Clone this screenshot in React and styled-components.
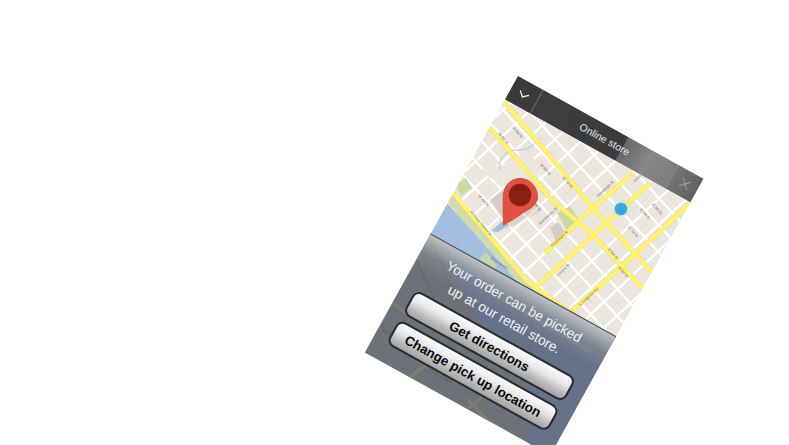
import React from "react";
import styled, { createGlobalStyle } from "styled-components";

const ANGLE = 29;

const GlobalStyle = createGlobalStyle`
    html, body {
        margin: 0;
        background: #fff;
        font-family: "Liberation Sans", Arial, sans-serif;
    }
`;

const Stage = styled.div`
    box-sizing: border-box;
    width: 789px;
    height: 445px;
    padding: 76px 0 0 518px;
    overflow: hidden;
    background: #fff;
`;

const Phone = styled.div`
    width: 212px;
    height: 316px;
    display: flex;
    flex-direction: column;
    transform-origin: 0 0;
    transform: rotate(${ANGLE}deg);
`;

const Header = styled.header`
    height: 27px;
    flex: none;
    display: flex;
`;

const HeaderButton = styled.div`
    width: ${(p) => p.$width}px;
    flex: none;
    display: flex;
    align-items: center;
    justify-content: center;
    box-sizing: border-box;
    background: ${(p) => p.$bg};
    ${(p) => p.$side}: 1px solid rgba(150, 150, 150, 0.35);
`;

const Title = styled.div`
    flex: 1;
    display: flex;
    align-items: center;
    justify-content: center;
    color: #e8e8e8;
    font-size: 10.3px;
    background: linear-gradient(to right, #3c3d3f 0, #3a3b3d 97px, #666768 97px, #868787 125px, #7c7d7d 155px);
`;

const MapFrame = styled.div`
    height: 153px;
    flex: none;
    background: #ebe7de;
    overflow: hidden;
`;

const Drawing = styled.svg`
    display: block;
`;

const Sheet = styled.section`
    position: relative;
    flex: 1;
    display: flex;
    flex-direction: column;
    align-items: center;
    box-sizing: border-box;
    padding: 9px 14px 0;
    overflow: hidden;
    background: #6e7278;
    border-top: 1px solid #4b4d50;
`;

const SheetMap = styled.svg`
    position: absolute;
    top: 0;
    left: 0;
`;

const SheetFade = styled.div`
    position: absolute;
    top: 0;
    left: 0;
    right: 0;
    height: 38px;
    background: linear-gradient(to bottom, rgba(205, 207, 205, 0.85), rgba(150, 155, 160, 0.4) 50%, rgba(110, 116, 126, 0));
`;

const Message = styled.p`
    position: relative;
    margin: 0 0 7px;
    width: 100%;
    text-align: center;
    white-space: nowrap;
    color: #f2f3f4;
    font-size: 13.8px;
    line-height: 19.5px;
`;

const Actions = styled.div`
    position: relative;
    width: 100%;
    display: flex;
    flex-direction: column;
    gap: 6px;
`;

const ActionButton = styled.button`
    height: 28px;
    padding: 0;
    box-sizing: border-box;
    border: 2px solid #2c2d2f;
    border-radius: 8px;
    background: linear-gradient(to bottom, #fbfbfb 0, #e6e6e6 40%, #b9b9b9 75%, #a4a4a4 100%);
    color: #0a0a0a;
    font-family: inherit;
    font-size: 13.3px;
    font-weight: 700;
    white-space: nowrap;
`;

// map is traced in page coordinates, this group takes it back into the panel
const toPanel = (top) =>
    `translate(0 ${-top}) rotate(${-ANGLE}) translate(-518 -76)`;

const R = [0.676, 0.737];
const C = [0.731, -0.682];

const line = (x, y, d, key) => (
    <line
        key={key}
        x1={x - d[0] * 400}
        y1={y - d[1] * 400}
        x2={x + d[0] * 400}
        y2={y + d[1] * 400}
    />
);

const whiteLong = Array.from({ length: 13 }, (_, i) => i - 6);
const whiteCross = Array.from({ length: 15 }, (_, i) => i - 7);

const yellow = [
    "M505,103 L593,208 L652,272 L680,302",
    "M490,128 L552,200 L593,235 L643,289",
    "M545,253 L593,208 L633,173",
    "M535,288 L593,235 L650,183",
    "M573,310 L643,247 L690,203",
    "M453,193 L527,281 L560,305 L620,345",
];

const labels = [
    ["W 5th St", 512, 128, 48],
    ["W 6th St", 498, 134, 48],
    ["W 3rd St", 478, 196, 48],
    ["San Antonio St", 540, 225, -43],
    ["Guadalupe St", 552, 247, -43],
    ["Guadalupe St", 598, 197, -43],
    ["Lavaca St", 558, 276, -43],
    ["N Congress Ave", 580, 306, -43],
    ["W Cesar Chavez St", 470, 212, 50],
    ["W 8th St", 540, 165, 48],
    ["W 7th St", 562, 178, 48],
    ["E 6th St", 608, 250, 48],
    ["E 5th St", 618, 268, 48],
    ["E 8th St", 640, 210, 48],
    ["E 7th St", 628, 228, 48],
    ["Colorado St", 635, 182, -43],
    ["Shoal Beach", 490, 258, 35],
    ["W 2nd St", 530, 200, 48],
    ["E 9th St", 652, 205, 48],
];

const CityMap = () => (
    <Drawing width="212" height="153" viewBox="0 0 212 153">
        <g transform={toPanel(27)}>
            <g stroke="#e2ddd2" strokeWidth="0.5" fill="none">
                {whiteLong.map((k) =>
                    line(599.8 + k * 13.6, 201.8 - k * 12.4, R, `ra${k}`)
                )}
                {whiteCross.map((k) =>
                    line(599.5 + k * 13, 215 + k * 13.9, C, `ca${k}`)
                )}
            </g>
            <g stroke="#fff" strokeWidth="2.2" fill="none">
                {whiteLong.map((k) =>
                    line(593 + k * 13.6, 208 - k * 12.4, R, `r${k}`)
                )}
                {whiteCross.map((k) =>
                    line(593 + k * 13, 208 + k * 13.9, C, `c${k}`)
                )}
            </g>
            <polygon points="490,200 503,190 520,212 505,222" fill="#d3cfc7" />
            <polygon points="550,227 558,222 566,233 556,241" fill="#d3cfc7" />
            <polygon points="505,165 525,150 535,160 540,185 500,185 480,170" fill="#ebe7de" />
            <path d="M500,170 C498,158 505,150 520,150 C528,150 532,146 540,138" fill="none" stroke="#a8c2e2" strokeWidth="1" />
            <polygon points="557,213 570,206 581,222 567,231" fill="#c9dba5" />
            <polygon points="455,185 466,178 472,188 461,196" fill="#c9dba5" />
            <polygon points="446,199 452,192 535,290 522,300" fill="#cfdcae" />
            <polygon points="447,203 523,288 500,320 410,250" fill="#a3bfdf" />
            <polygon points="480,258 486,252 497,266 493,272" fill="#c4d6a4" />
            <path d="M491,231 L504,220 L509,225 L498,232 Z" fill="#a3bfdf" />
            <g fill="none" strokeLinecap="butt">
                {yellow.map((d) => (
                    <path key={`o${d}`} d={d} stroke="#efdc66" strokeWidth="4.6" />
                ))}
                {yellow.map((d) => (
                    <path key={d} d={d} stroke="#fff270" strokeWidth="3.8" />
                ))}
            </g>
            <g fontSize="3.6" fill="#6a675f" fontFamily="'Liberation Sans', sans-serif">
                {labels.map(([text, x, y, a]) => (
                    <text key={text + x} transform={`translate(${x} ${y}) rotate(${a})`}>
                        {text}
                    </text>
                ))}
            </g>
            <circle cx="621" cy="209" r="8" fill="#bfe0ee" opacity="0.6" />
            <circle cx="621" cy="209" r="6.2" fill="#38a8dd" />
            <path d="M503,226 L538,208 L520,178 Z" fill="#8a8780" opacity="0.2" transform="translate(3 3)" />
            <path
                d="M503,226 C503,214 502,203 503,193 C505,183 513,177 522,178 C532,179 539,189 538,199 C536,205 531,209 525,212 C518,217 510,222 503,226 Z"
                fill="#e0523f"
            />
            <circle cx="520" cy="195" r="11.3" fill="#8b1d15" />
        </g>
    </Drawing>
);

const FadedMap = () => (
    <SheetMap width="212" height="136" viewBox="0 0 212 136">
        <g transform={toPanel(180)}>
            <polygon points="436,236 472,308 528,382 528,460 640,460 640,300 560,300" fill="#66728a" />
            <path d="M430,236 L458,300 M412,250 L450,330" stroke="#5d6268" strokeWidth="1" fill="none" />
            <g stroke="#7a7f70" fill="none" strokeWidth="3.5">
                <path d="M393,302 L413,317" />
                <path d="M408,378 L435,358" />
                <path d="M468,408 L490,390" />
                <path d="M468,398 L490,422" />
                <path d="M470,340 L500,366" />
            </g>
            <path d="M500,296 L590,350" stroke="#747c86" strokeWidth="5" fill="none" />
            <g fontSize="3.6" fill="#545960" fontFamily="'Liberation Sans', sans-serif">
                <text transform="translate(383 330) rotate(30)">Auditorium Shores</text>
                <text transform="translate(432 372) rotate(30)">Palmer Center</text>
            </g>
        </g>
    </SheetMap>
);

const App = () => (
    <>
        <GlobalStyle />
        <Stage>
            <Phone>
                <Header>
                    <HeaderButton $width={29} $side="border-right" $bg="#3a3b3d">
                        <Drawing width="12" height="8" viewBox="0 0 12 8">
                            <path d="M1 1.5 L6 6.2 L11 1.5" fill="none" stroke="#f2f2f2" strokeWidth="1.3" />
                        </Drawing>
                    </HeaderButton>
                    <Title>Online store</Title>
                    <HeaderButton $width={28} $side="border-left" $bg="linear-gradient(to right, #737474, #606162)">
                        <Drawing width="11" height="11" viewBox="0 0 11 11">
                            <path d="M1 1 L10 10 M10 1 L1 10" fill="none" stroke="#a6a7a7" strokeWidth="0.9" />
                        </Drawing>
                    </HeaderButton>
                </Header>
                <MapFrame>
                    <CityMap />
                </MapFrame>
                <Sheet>
                    <FadedMap />
                    <SheetFade />
                    <Message>
                        Your order can be picked
                        <br />
                        up at our retail store.
                    </Message>
                    <Actions>
                        <ActionButton>Get directions</ActionButton>
                        <ActionButton>Change pick up location</ActionButton>
                    </Actions>
                </Sheet>
            </Phone>
        </Stage>
    </>
);

export default App;
